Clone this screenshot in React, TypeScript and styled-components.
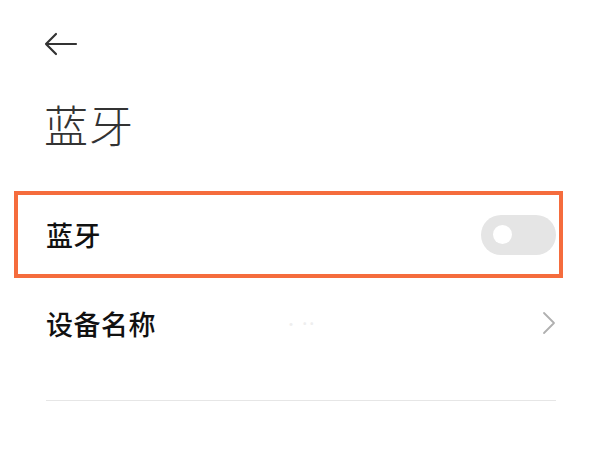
import React from "react";
import styled, { createGlobalStyle } from "styled-components";

const GlobalStyle = createGlobalStyle`
  html, body {
    margin: 0;
    padding: 0;
    background: #ffffff;
  }
  body {
    font-family: "Noto Sans CJK SC", "Noto Sans", sans-serif;
  }
`;

const Page = styled.div`
  width: 600px;
  height: 450px;
  box-sizing: border-box;
  padding: 0 37px 0 14px;
  display: flex;
  flex-direction: column;
  background: #ffffff;
  overflow: hidden;
`;

const Header = styled.div`
  padding: 32px 0 0 30px;
  display: flex;
  flex-direction: column;
`;

const BackButton = styled.button`
  width: 34px;
  height: 24px;
  padding: 0;
  border: none;
  background: none;
  display: flex;
  align-items: center;
`;

const Title = styled.h1`
  margin: 40px 0 0;
  font-size: 44px;
  font-weight: 300;
  line-height: 56px;
  color: #333333;
  letter-spacing: 1px;
`;

const HighlightRow = styled.div`
  margin-top: 39px;
  height: 87px;
  box-sizing: border-box;
  border: 4px solid #f56c3d;
  display: flex;
  align-items: center;
  justify-content: space-between;
  padding: 0 3px 0 28px;
`;

const Row = styled.div`
  height: 90px;
  display: flex;
  align-items: center;
  justify-content: space-between;
  padding: 0 7px 0 32px;
`;

const Label = styled.span`
  font-size: 27px;
  font-weight: 500;
  color: #111111;
  letter-spacing: 0.5px;
`;

const Switch = styled.div<{ $on?: boolean }>`
  width: 75px;
  height: 40px;
  border-radius: 20px;
  background: ${(p) => (p.$on ? "#0d84ff" : "#e5e5e5")};
  display: flex;
  align-items: center;
  padding: 0 12px;
  box-sizing: border-box;
  justify-content: ${(p) => (p.$on ? "flex-end" : "flex-start")};
`;

const Knob = styled.span`
  width: 19px;
  height: 19px;
  border-radius: 50%;
  background: #ffffff;
`;

const Value = styled.span`
  flex: 1;
  text-align: left;
  padding-left: 128px;
  font-size: 14px;
  color: #eeeeee;
`;

const Divider = styled.div`
  margin: 32px 7px 0 32px;
  height: 1px;
  background: #e6e6e6;
`;

const BackArrow = () => (
  <svg width="34" height="24" viewBox="0 0 34 24" fill="none">
    <path
      d="M32 12H2M12 2L2 12l10 10"
      stroke="#333333"
      strokeWidth="2.2"
      strokeLinecap="round"
      strokeLinejoin="round"
    />
  </svg>
);

const Chevron = () => (
  <svg width="14" height="24" viewBox="0 0 14 24" fill="none">
    <path
      d="M2 2l10 10L2 22"
      stroke="#b0b0b0"
      strokeWidth="1.8"
      strokeLinecap="round"
      strokeLinejoin="round"
    />
  </svg>
);

export default function App() {
  return (
    <>
      <GlobalStyle />
      <Page>
        <Header>
          <BackButton aria-label="返回">
            <BackArrow />
          </BackButton>
          <Title>蓝牙</Title>
        </Header>
        <HighlightRow>
          <Label>蓝牙</Label>
          <Switch>
            <Knob />
          </Switch>
        </HighlightRow>
        <Row>
          <Label>设备名称</Label>
          <Value>· ˙˙</Value>
          <Chevron />
        </Row>
        <Divider />
      </Page>
    </>
  );
}
